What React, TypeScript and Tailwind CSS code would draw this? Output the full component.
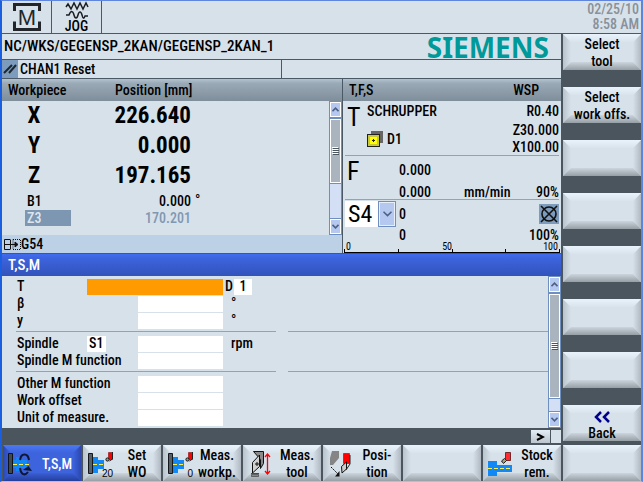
import type { ReactNode } from "react";

type SoftkeyProps = { children?: ReactNode; icon?: ReactNode; active?: boolean; label?: string };

function Bevel({ active }: { active?: boolean }) {
  return (
    <span aria-hidden="true" className="pointer-events-none absolute inset-0">
      <span
        className={`absolute inset-y-0 left-0 w-2 [clip-path:polygon(0_0,100%_8px,100%_calc(100%-8px),0_100%)] bg-linear-to-r ${active ? "from-[#2b48b0] to-[#3d63dd]" : "from-[#b9c3cc] to-[#d7e1ea]"}`}
      />
      <span
        className={`absolute inset-y-0 right-0 w-2 [clip-path:polygon(0_8px,100%_0,100%_100%,0_calc(100%-8px))] bg-linear-to-l ${active ? "from-[#2b48b0] to-[#3d63dd]" : "from-[#b0b9c1] to-[#d7e1ea]"}`}
      />
      <span
        className={`absolute inset-x-0 top-0 h-2 [clip-path:polygon(0_0,100%_0,calc(100%-8px)_100%,8px_100%)] bg-linear-to-b ${active ? "from-[#4c78f4] to-[#3d63dd]" : "from-[#e9f3fc] to-[#d9e3ec]"}`}
      />
      <span
        className={`absolute inset-x-0 bottom-0 h-2 [clip-path:polygon(8px_0,calc(100%-8px)_0,100%_100%,0_100%)] bg-linear-to-t ${active ? "from-[#243f9c] to-[#3a5fd6]" : "from-[#979fa6] to-[#ccd5dd]"}`}
      />
    </span>
  );
}

function Softkey({ children, icon, active, label }: SoftkeyProps) {
  return (
    <button
      type="button"
      aria-label={label}
      className={`relative flex h-9 min-w-0 items-center text-center leading-[17px] ${active ? "bg-[#3d63dd] text-white" : "bg-[#d7e1ea] text-black"}`}
    >
      <Bevel active={active} />
      {icon && <span className="relative w-[30px] shrink-0">{icon}</span>}
      <span className="relative flex-1 pt-0.5">{children}</span>
    </button>
  );
}

function Scrollbar({ thumb, track }: { thumb: string; track: string }) {
  const arrow =
    "flex h-[17px] w-full shrink-0 items-center justify-center border border-[#6f8fbe] bg-[#b5c8ef] shadow-[inset_0_0_0_1px_#fff]";
  return (
    <div className="flex w-[13px] shrink-0 flex-col bg-[#d3dff5]">
      <button type="button" aria-label="Scroll up" className={arrow}>
        <svg width="7" height="5" viewBox="0 0 7 5" fill="none" stroke="#4d6185" strokeWidth="1.6">
          <path d="M.5 4.2 3.5 1.2 6.5 4.2" />
        </svg>
      </button>
      <div className={`flex items-center justify-center border border-[#6f8fbe] bg-[#aab4be] shadow-[inset_0_0_0_1px_#fff] ${thumb}`}>
        <svg width="7" height="8" viewBox="0 0 7 8" shapeRendering="crispEdges">
          <path d="M0 .5h6M0 2.5h6M0 4.5h6M0 6.5h6" stroke="#fff" />
          <path d="M1 1.5h6M1 3.5h6M1 5.5h6M1 7.5h6" stroke="#4b555e" />
        </svg>
      </div>
      <div className={`border-x border-[#6f8fbe] ${track}`} />
      <button type="button" aria-label="Scroll down" className={arrow}>
        <svg width="7" height="5" viewBox="0 0 7 5" fill="none" stroke="#4d6185" strokeWidth="1.6">
          <path d="M.5 .8 3.5 3.8 6.5 .8" />
        </svg>
      </button>
    </div>
  );
}

const iconBox = { width: 32, height: 34, viewBox: "0 0 32 34" };

function RotateIcon() {
  return (
    <svg {...iconBox}>
      <path d="M5.500 7.500h4v20h-4z" fill="#3f4950" stroke="#101418" />
      <path d="M10 14h3v-3h5v3h6v8h-6v3h-5v-3h-3z" fill="#1188f5" />
      <path d="M10 18.500h18" stroke="#fff04a" strokeDasharray="4 2" />
      <path d="M17 14C18 6.500 25 6.500 26 14M17 22c1 7 5 8 8 4" fill="none" stroke="#0d1838" strokeWidth="2" />
      <path d="m20 24 5.500-4L29 25z" fill="#0d1838" />
    </svg>
  );
}

function ProbeIcon({ value }: { value: string }) {
  return (
    <svg {...iconBox}>
      <path d="M5.500 7.500h4v20h-4z" fill="#566069" stroke="#14181c" />
      <path d="M10 11h5v3h6v9h-6v4h-5z" fill="#1188f5" />
      <path d="M10 18.500h12" stroke="#fff04a" strokeDasharray="4 2" />
      <path d="M25.500 6.500h4v7h-4z" fill="#f00" stroke="#801010" strokeWidth=".6" />
      <path d="M29.500 6v7l-3 2" fill="none" stroke="#222" />
      <circle cx="24.500" cy="13.500" r="1.600" fill="#999" stroke="#111" />
      <text x="30" y="31" textAnchor="end" fontSize="10" fontFamily="Liberation Sans" fill="#000">{value}</text>
    </svg>
  );
}

function MeasureToolIcon() {
  return (
    <svg {...iconBox}>
      <path d="M10.500 5.500h10v12l-3 5v-9z" fill="#8a8a8a" stroke="#111" />
      <path d="m9.500 16.500 7-7.500v11.500l-7 6.500z" fill="#d0d0d0" stroke="#111" />
      <path d="M12 18h4M14 16v4" stroke="#111" />
      <path d="M8 27.500h8" stroke="#f00" />
      <path d="M8.500 28.500h7v2h-7z" fill="#888" stroke="#333" strokeWidth=".6" />
      <path d="M24.500 8v20M22 11l2.500-3L27 11M22 25l2.500 3 2.500-3" fill="none" stroke="#f00" strokeWidth="1.300" />
    </svg>
  );
}

function PositionIcon() {
  return (
    <svg {...iconBox}>
      <path d="M9 5h7v7l-6 7H7v-7z" fill="#858585" />
      <path d="M20.500 7.500h6v10h-6z" fill="#f00" stroke="#801010" strokeWidth=".6" />
      <path d="m18.500 20.500 5-4.500v7l-4.500 4z" fill="#ccc" stroke="#111" />
      <path d="M27 9v9l-4 6" fill="none" stroke="#222" />
      <path d="m8 21 8 8" stroke="#111" strokeDasharray="2 1" />
      <path d="M16.500 25v5.500H12z" fill="#111" />
    </svg>
  );
}

function StockIcon() {
  return (
    <svg {...iconBox}>
      <path d="M5 15h9v4h15v7H14v4H5z" fill="#1188f5" />
      <path d="M5 22.500h24" stroke="#fff04a" strokeDasharray="4 2" />
      <path d="M22.500 6.500h5v8h-5z" fill="#ff2b30" stroke="#501010" strokeWidth=".8" />
      <path d="m18.500 15 3-2.500 2 2-3 3z" fill="#b09a70" stroke="#222" />
    </svg>
  );
}

function Field({ id, label, unit }: { id: string; label: string; unit?: string }) {
  return (
    <div className="flex h-[17px] items-center">
      <label htmlFor={id} className="w-[122px] shrink-0 pl-px whitespace-nowrap">
        {label}
      </label>
      <input id={id} className="h-4 w-[85px] shrink-0 bg-white px-1 outline-none" />
      {unit && <span className="pl-2">{unit}</span>}
    </div>
  );
}

const axes = [
  { name: "X", value: "226.640" },
  { name: "Y", value: "0.000" },
  { name: "Z", value: "197.165" },
];

const line = "border-[#4b5866]";
const bar = "bg-linear-to-b from-[#b4c3d0] via-[#9aa9b6] via-20% to-[#7f8e9a]";

export default function App() {
  return (
    <div className="border-t border-r-2 border-b border-l-2 border-t-[#5f86dc] border-r-[#5b86e0] border-b-[#a9c0ea] border-l-[#1a5fe0] bg-[#d7e1ea] font-['Roboto_Condensed','Roboto',sans-serif] text-[14px] leading-[17px] font-medium text-black">
      <header className={`flex h-[33px] border-b ${line}`}>
        <div className={`flex w-[50px] items-center justify-center border-r ${line}`}>
          <svg width="30" height="28" viewBox="0 0 30 28" role="img" aria-label="Machine">
            <path d="M2.500 8V1.500h25V8M2.500 18.500v8h25v-8" fill="none" stroke="#22262a" strokeWidth="3" />
            <text x="15" y="22" textAnchor="middle" fontSize="22" fontWeight="400" fontFamily="Liberation Sans" fill="#22262a">M</text>
          </svg>
        </div>
        <div className={`flex w-[50px] flex-col items-center border-r ${line}`}>
          <svg width="24" height="19" viewBox="0 0 24 19" fill="none" stroke="#1a1e22" strokeWidth="1.5" aria-hidden="true">
            <path d="m1 6 2-3 3 5 3-6 3 6 3-6 3 6 3-6 2 4" />
            <path d="M1 14h3c2-5 4-4 5 0s3 4 4 0 3-4 4 0 2 4 3 1h3" />
          </svg>
          <span className="leading-[13px]">JOG</span>
        </div>
        <div className="ml-auto pt-px pr-0.5 text-right leading-[15px] text-[#87919a]">
          <div>02/25/10</div>
          <div>8:58 AM</div>
        </div>
      </header>

      <div className="flex">
        <main className="min-w-0 flex-1">
          <div className={`flex h-[26px] items-center justify-between border-b pr-3 pl-0.5 ${line}`}>
            <span className="text-[15px]">NC/WKS/GEGENSP_2KAN/GEGENSP_2KAN_1</span>
            <span className="font-['Noto_Sans',sans-serif] text-[28px] leading-[24px] font-bold text-[#009999]">SIEMENS</span>
          </div>
          <div className={`grid h-[19px] grid-cols-2 border-b ${line}`}>
            <div className={`flex items-center border-r ${line}`}>
              <svg width="16" height="18" viewBox="0 0 16 18" className="mr-0.5 bg-[#7d9cbd]" aria-hidden="true">
                <path d="m2 13 8-8M7 13l7-8" stroke="#1d2730" strokeWidth="2" />
              </svg>
              CHAN1 Reset
            </div>
          </div>

          <div className="flex">
            <section className={`flex min-w-0 flex-1 flex-col border-r ${line}`}>
              <div className={`flex h-[22px] items-center pl-1.5 ${bar}`}>
                <h2 className="w-[107px]">Workpiece</h2>
                <span>Position [mm]</span>
              </div>
              <div className="flex flex-1">
                <div className="flex-1 pl-[23px]">
                  <table className="table-fixed">
                    <tbody>
                      {axes.map((axis) => (
                        <tr key={axis.name} className="h-[30px] text-[23px] leading-[30px]">
                          <th scope="row" className="w-[46px] pr-7 text-center font-bold">{axis.name}</th>
                          <td className="w-[120px] text-right font-bold">{axis.value}</td>
                          <td />
                        </tr>
                      ))}
                      <tr>
                        <th scope="row" className="pt-0.5 pl-0.5 text-left font-medium">B1</th>
                        <td className="pt-0.5 text-right">0.000</td>
                        <td className="pl-1">°</td>
                      </tr>
                      <tr className="text-[#8097b1]">
                        <th scope="row" className="bg-[#7d96b1] pl-0.5 text-left leading-4 font-medium text-[#dde6ee]">Z3</th>
                        <td className="text-right leading-4">170.201</td>
                        <td />
                      </tr>
                    </tbody>
                  </table>
                </div>
                <Scrollbar thumb="grow-5" track="grow-3" />
              </div>
              <div className="flex h-[18px] items-center bg-[#bcd1e5] pl-0.5">
                <svg width="17" height="11" viewBox="0 0 17 11" fill="none" stroke="#111" aria-hidden="true">
                  <path d="M6 .5H.5v10H6M.5 5.500H13M6.500 .5v10" />
                  <path d="M9 .5h7.500v10H9z" strokeDasharray="1 1" />
                  <path d="m11 3 3 2.500-3 2.500z" fill="#111" />
                </svg>
                G54
              </div>
            </section>

            <section className="flex w-[218px] shrink-0 flex-col">
              <div className={`flex h-[22px] items-center justify-between pr-[22px] pl-1.5 ${bar}`}>
                <h2>T,F,S</h2>
                <span>WSP</span>
              </div>
              <div className="mr-0.5 ml-0.5 flex h-[55px] border-b border-[#86a5cb] pt-0.5">
                <span className="w-[22px] pl-0.5 text-[26px] leading-[28px] font-normal">T</span>
                <div className="flex flex-1 flex-col gap-[11px]">
                  <span>SCHRUPPER</span>
                  <span className="flex items-center gap-[3px]">
                    <svg width="17" height="17" viewBox="0 0 17 17" shapeRendering="crispEdges" aria-hidden="true">
                      <path d="M4 0h12v12H4z" fill="#666" />
                      <path d="M.5 3.500h12v12H.5z" fill="#c9c93a" stroke="#222" />
                      <path d="M3 6h7v7H3z" fill="#ff0" />
                      <path d="M5 9.500h3M6.500 8v3" stroke="#222" />
                    </svg>
                    D1
                  </span>
                </div>
                <div className="text-right">
                  <div className="mb-0.5">R0.40</div>
                  <div>Z30.000</div>
                  <div>X100.00</div>
                </div>
              </div>
              <div className="mr-0.5 ml-0.5 flex h-11 border-b border-[#86a5cb] pt-[7px] leading-[14px]">
                <span className="w-[54px] pl-0.5 text-[26px] leading-[16px] font-normal">F</span>
                <div className="flex-1">
                  <div className="mb-2">0.000</div>
                  <div className="flex">
                    <span className="w-[65px]">0.000</span>
                    <span>mm/min</span>
                    <span className="ml-auto">90%</span>
                  </div>
                </div>
              </div>
              <div className="mr-0.5 flex h-[43px] pl-0.5">
                <div className="relative mt-px h-[26px] w-[51px]">
                  <select aria-label="Spindle" className="h-[26px] w-[51px] appearance-none bg-white pl-[3px] text-[24px] leading-[26px] font-normal outline-none">
                    <option>S4</option>
                  </select>
                  <span className="pointer-events-none absolute top-0 right-0 flex h-[26px] w-[18px] items-center justify-center border border-[#6f8fbe] bg-[#b5c8ef] shadow-[inset_0_0_0_1px_#e8effb]">
                    <svg width="9" height="6" viewBox="0 0 9 6" fill="none" stroke="#4d6185" strokeWidth="1.500" aria-hidden="true">
                      <path d="M.5 .8 4.500 4.600 8.500 .8" />
                    </svg>
                  </span>
                </div>
                <div className="flex flex-1 flex-col pt-1 pl-[3px]">
                  <div className="flex h-5 items-center justify-between">
                    0
                    <svg width="20" height="20" viewBox="0 0 20 20" className="bg-[#7d9cbd]" fill="none" stroke="#111" strokeWidth="1.600" role="img" aria-label="Spindle stopped">
                      <circle cx="10" cy="10" r="7" />
                      <path d="m2 2 16 16M18 2 2 18" />
                    </svg>
                  </div>
                  <div className="mt-[3px] flex justify-between">
                    <span>0</span>
                    <span>100%</span>
                  </div>
                </div>
              </div>
              <div className="mr-px ml-px">
                <div className="flex h-[6px] justify-between px-0.5 text-[10px] leading-[8px] font-normal">
                  <span>0</span>
                  <span>50</span>
                  <span>100</span>
                </div>
                <div className="grid h-1 grid-cols-4 border-r border-b border-black">
                  <span className="border-l border-black" />
                  <span className="border-l border-black" />
                  <span className="border-l border-black" />
                  <span className="border-l border-black" />
                </div>
              </div>
            </section>
          </div>

          <section>
            <h2 className={`flex h-[23px] items-center border-t bg-linear-to-b from-[#3f6cf0] via-[#3d63dd] via-20% to-[#3253bb] pl-1.5 text-[15px] text-white ${line}`}>
              T,S,M
            </h2>
            <div className="flex">
              <form className="grid flex-1 grid-cols-2 grid-rows-[56px_40px_56px] gap-x-3 pl-3.5">
                <div className="border-b border-[#86a5cb] pt-0.5">
                  <div className="flex h-[17px] items-center">
                    <label htmlFor="tool" className="w-[71px] pl-px">T</label>
                    <input id="tool" className="h-4 w-[136px] bg-[#ff9a00] px-1 outline-none" />
                    <label htmlFor="edge" className="w-[11px] pl-0.5">D</label>
                    <input id="edge" defaultValue="1" className="h-4 w-[18px] bg-white text-center outline-none" />
                  </div>
                  <Field id="beta" label="β" unit="°" />
                  <Field id="gamma" label="y" unit="°" />
                </div>
                <div className="border-b border-[#86a5cb]" />
                <div className="border-b border-[#86a5cb] pt-[3px]">
                  <div className="flex h-[17px] items-center">
                    <label htmlFor="spindle" className="w-[71px] pl-px">Spindle</label>
                    <input id="spindle" defaultValue="S1" className="h-4 w-[19px] bg-white pl-0.5 outline-none" />
                    <input aria-label="Spindle speed" className="ml-8 h-4 w-[85px] bg-white px-1 outline-none" />
                    <span className="pl-2">rpm</span>
                  </div>
                  <Field id="spindle-m" label="Spindle M function" />
                </div>
                <div className="border-b border-[#86a5cb]" />
                <div className="pt-[3px]">
                  <Field id="other-m" label="Other M function" />
                  <Field id="offset" label="Work offset" />
                  <Field id="unit" label="Unit of measure." />
                </div>
              </form>
              <Scrollbar thumb="grow-8" track="grow" />
            </div>
            <div className="flex h-[17px] items-start justify-end gap-px bg-[#4b555e] pt-0.5">
              <button type="button" aria-label="More softkeys" className="flex h-[13px] w-[19px] items-center justify-center bg-linear-to-b from-[#e4edf5] to-[#bcc5cd]">
                <svg width="9" height="8" viewBox="0 0 9 8" fill="none" stroke="#000" strokeWidth="2">
                  <path d="m1 1 6 3-6 3" />
                </svg>
              </button>
              <span className="h-[13px] w-2.5 bg-[#d7e1ea]" />
            </div>
          </section>
        </main>

        <aside className="grid w-20 shrink-0 auto-rows-[36px] content-start gap-[17px] bg-[#4b555e] pl-0.5">
          <Softkey>Select<br />tool</Softkey>
          <Softkey>Select<br />work offs.</Softkey>
          <Softkey label="Softkey 3" />
          <Softkey label="Softkey 4" />
          <Softkey label="Softkey 5" />
          <Softkey label="Softkey 6" />
          <Softkey label="Softkey 7" />
          <Softkey>
            <svg width="16" height="12" viewBox="0 0 16 12" className="mx-auto mt-1 mb-0.5" fill="none" stroke="#00008c" strokeWidth="2.500" aria-hidden="true">
              <path d="M7 1 2 6l5 5M15 1l-5 5 5 5" />
            </svg>
            Back
          </Softkey>
        </aside>
      </div>

      <nav aria-label="Softkeys" className="grid grid-cols-8 gap-0.5 bg-[#4b555e] pl-px">
        <Softkey active icon={<RotateIcon />}>T,S,M</Softkey>
        <Softkey icon={<ProbeIcon value="20" />}>Set<br />WO</Softkey>
        <Softkey icon={<ProbeIcon value="0" />}>Meas.<br />workp.</Softkey>
        <Softkey icon={<MeasureToolIcon />}>Meas.<br />tool</Softkey>
        <Softkey icon={<PositionIcon />}>Posi-<br />tion</Softkey>
        <Softkey label="Softkey 14" />
        <Softkey icon={<StockIcon />}>Stock<br />rem.</Softkey>
        <Softkey label="Softkey 16" />
      </nav>
    </div>
  );
}
